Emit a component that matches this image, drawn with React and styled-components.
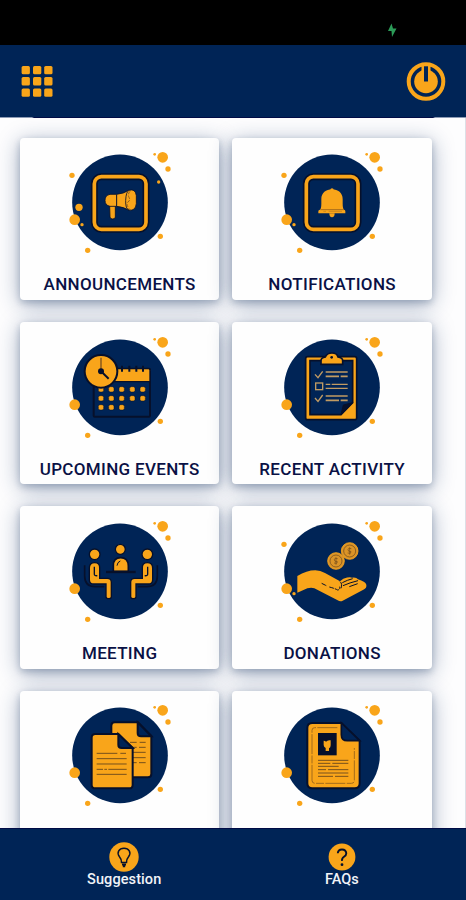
import React from "react"
import styled, { createGlobalStyle } from "styled-components"

const NAVY = "#002456"
const GOLD = "#f9a51a"
const INK = "#06102b"

const GlobalStyle = createGlobalStyle`
  * {
    box-sizing: border-box;
  }

  body {
    margin: 0;
    background: #fdfdfe;
    font-family: Roboto, sans-serif;
  }
`

const Screen = styled.div`
  display: flex;
  flex-direction: column;
  height: 900px;
  overflow: hidden;
`

const StatusBar = styled.div`
  flex: none;
  display: flex;
  justify-content: flex-end;
  height: 45px;
  padding: 23px 68px 0 0;
  background: #000;
`

const Header = styled.header`
  flex: none;
  display: flex;
  align-items: center;
  justify-content: space-between;
  height: 73px;
  padding: 0 20px 1px 21px;
  background:
    linear-gradient(90deg, #8d9bb5 32px, #000b45 34px, #000b45 433px, #8d9bb5 435px) bottom / 100% 1px no-repeat,
    ${NAVY};
`

const IconButton = styled.button`
  display: flex;
  padding: 0;
  border: 0;
  background: none;
`

const Content = styled.main`
  flex: 1;
  min-height: 0;
  overflow: hidden;
  padding: 19.7px 34px 0 20px;
  border-right: 1px solid #dcdfe6;
`

const Grid = styled.div`
  display: grid;
  grid-template-columns: 199.3px 199.3px;
  grid-auto-rows: 162.3px;
  gap: 22.1px 13.2px;
`

const Card = styled.div`
  display: flex;
  flex-direction: column;
  align-items: center;
  padding-top: 7.6px;
  border-radius: 4px;
  background: #fefefe;
  box-shadow: 0 3px 7px rgba(20, 50, 90, .24), 0 4px 22px rgba(20, 50, 100, .4);
`

const Art = styled.svg`
  flex: none;
  width: 120px;
  height: 115px;
`

const CardTitle = styled.div`
  margin-top: 14px;
  font-size: 17px;
  font-weight: 500;
  line-height: 20px;
  letter-spacing: .33px;
  color: #0a1145;
  white-space: nowrap;
`

const BottomNav = styled.nav`
  flex: none;
  display: flex;
  justify-content: center;
  height: 72px;
  padding-top: 13px;
  background: ${NAVY};
  border-top: 1px solid #000b45;
`

const NavItem = styled.a`
  display: flex;
  flex-direction: column;
  align-items: center;
  width: 217.6px;
  color: #f1f3f8;
  font-size: 14.5px;
  font-weight: 500;
  line-height: 15px;
  letter-spacing: ${props => props.$spacing}px;
`

const NavIcon = styled.svg`
  width: 30px;
  height: 30px;
`

// The artwork is drawn around the centre of the navy disc
const dots = [
  [128, -135, 16],
  [144, -100, 8],
  [104, -144, 4],
  [-136, 52, 16],
  [121, 102, 8],
  [-97, 144, 8],
]

const Badge = ({ extra = [], children }) => (
  <Art viewBox="-180 -172 360 345">
    <circle r="143.5" fill={NAVY} />
    {dots.concat(extra).map(([x, y, r]) => (
      <circle key={`${x},${y}`} cx={x} cy={y} r={r} fill={GOLD} />
    ))}
    {children}
  </Art>
)

const Frame = () => (
  <g fill="none">
    <rect x="-77" y="-77" width="155" height="158" rx="21" stroke={INK} strokeWidth="21" />
    <rect x="-77" y="-77" width="155" height="158" rx="21" stroke={GOLD} strokeWidth="11" />
  </g>
)

const Announcements = () => (
  <Badge extra={[[-144, -81, 8], [116, -61, 5], [-123, 15, 11], [-114, 67, 5]]}>
    <Frame />
    <g fill={GOLD} stroke={INK} strokeWidth="2.5">
      <path d="M-31 10h17v34q0 6-8 6t-8-6z" />
      <path d="M-10-24V12H-30Q-45 9-45-6T-30-24Z" />
      <path d="M-10-24Q12-26 27-37V24Q12 14-10 12Z" />
      <path d="M27-36Q46-42 49-20V4Q46 27 27 23Q16 20 17-6T27-36Z" />
      <path d="M30-33q-8 9-3 18t-3 14 4 21" fill="none" stroke="#7b501d" strokeDasharray="10 4" />
    </g>
  </Badge>
)

const Notifications = () => (
  <Badge extra={[[-144, -81, 8], [-114, 67, 5]]}>
    <Frame />
    <g fill={GOLD}>
      <circle cy="-37" r="5" />
      <path d="M-8 33H8Q8 45 0 45T-8 33Z" />
      <path d="M-41 33v-6q0-4 5-5 4-4 4-18V-10C-32-28-18-39 0-39S32-28 32-10V4q0 14 4 18 4 1 4 5v6z" />
      <path d="M-35 22H36" stroke="#a86c1c" strokeWidth="3" />
      <path d="M-10 27H30M-26 27h8" stroke="#a86c1c" strokeWidth="1.5" />
    </g>
  </Badge>
)

const UpcomingEvents = () => (
  <Badge>
    <rect x="-79" y="-56" width="169" height="144" rx="3" fill="none" stroke={INK} strokeWidth="6" />
    <path d="M-79-56H85q5 0 5 5V-17H-79Z" fill={GOLD} stroke={INK} strokeWidth="4" />
    <path d="M6-65v18M28-65v18M49-65v18M69-65v18" stroke={INK} strokeWidth="6" />
    {[6, 33, 60].map(y =>
      [-57, -26, 5, 37, 68].slice(0, y === 60 ? 3 : 5).map(x => (
        <rect key={`${x},${y}`} x={x - 8} y={y - 8} width="16" height="16" rx="5" fill={GOLD} stroke={INK} strokeWidth="1.5" />
      ))
    )}
    <circle cx="-57" cy="-48" r="49" fill={GOLD} stroke={INK} strokeWidth="6" />
    <path d="M-57-48V-89" stroke="#7b501d" strokeWidth="4" />
    <path d="M-57-48L-34-26" stroke={INK} strokeWidth="6" />
    <circle cx="-57" cy="-48" r="9" fill={INK} />
  </Badge>
)

const RecentActivity = () => (
  <Badge>
    <rect x="-79" y="-92" width="153" height="189" rx="6" fill={GOLD} stroke={INK} strokeWidth="5" />
    <path d="M-66-80H62V46L27 82H-66Z" fill={NAVY} stroke={INK} strokeWidth="5" />
    <path d="M62 46L27 82L34 53Z" fill={INK} stroke={INK} strokeWidth="3" strokeLinejoin="round" />
    <path d="M-33-69V-80q0-9 13-11Q-15-103 0-103T18-91q14 2 14 11v11z" fill={GOLD} stroke={INK} strokeWidth="5" />
    <circle cx="-1" cy="-90" r="4" fill={INK} />
    <g fill="none" stroke="#c19b63" strokeWidth="4">
      <path d="M-51-39l9 10 14-19M-51 32l9 10 14-19" />
      <rect x="-49" y="-13" width="21" height="20" />
      <path d="M-19-46H47M-19 26H47M-19 3H47M-19-9h14m4 0H47" />
      <path d="M-19-33h40m5 0H47M-19 39h40m5 0H47" strokeWidth="5" />
    </g>
  </Badge>
)

const Sitter = () => (
  <g>
    <path d="M-106-18V14Q-106 46-74 46H-47" fill="none" stroke={INK} strokeWidth="5" />
    <path
      d="M-92-10Q-92-26-76-26T-61-10V21H-38Q-26 21-26 33V76q0 6-8 6t-8-6V38H-79q-13 0-13-13z"
      fill={GOLD}
      stroke={INK}
      strokeWidth="4"
    />
    <path d="M-77-14V9q0 5 9 4" fill="none" stroke={INK} strokeWidth="4" />
    <circle cx="-76" cy="-51" r="16" fill={GOLD} stroke={INK} strokeWidth="4" />
  </g>
)

const Meeting = () => (
  <Badge>
    <Sitter />
    <g transform="translate(6 0) scale(-1 1)">
      <Sitter />
    </g>
    <path d="M-20 0V-17Q-20-41 2-41T25-17V0Z" fill={GOLD} stroke={INK} strokeWidth="5" />
    <path d="M-9-17Q-8-28 1-31" fill="none" stroke={INK} strokeWidth="3" />
    <path d="M-42 2H47" stroke={INK} strokeWidth="7" />
    <circle cx="1" cy="-66" r="15" fill={GOLD} stroke={INK} strokeWidth="4" />
  </Badge>
)

const Coin = ({ x, y }) => (
  <g transform={`translate(${x} ${y})`} fill="none" stroke="#81551d" strokeWidth="2.5">
    <circle r="25" fill="#db9427" stroke={GOLD} />
    <circle r="18" />
    <path d="M5-7Q-5-11-5-4T4 2Q5 10-6 6M0-11V11" />
  </g>
)

const Donations = () => (
  <Badge extra={[[-144, -81, 8], [-114, 67, 5]]}>
    <Coin x={53} y={-61} />
    <Coin x={12} y={-31} />
    <path
      d="M-104 14Q-76-3-50-3-35-3-21 5L24 30 34 22Q53 16 60 19 73 17 78 24 100 31 103 40 105 50 94 55L32 88Q25 92 17 87L-53 51Q-62 47-74 51L-104 64Z"
      fill={GOLD}
    />
    <g fill="none" stroke={INK} strokeWidth="3">
      <path d="M-31 36l16 8M-8 47Q8 51 17 56 25 55 23 46" strokeDasharray="14 3" />
      <path d="M24 31Q32 37 27 51M31 34Q46 26 62 22M33 43Q53 34 78 28M52 46L77 37" />
    </g>
  </Badge>
)

const Documents = () => (
  <Badge>
    <path d="M-16-99H54L94-58V56q0 10-10 10H-16q-10 0-10-10V-89q0-10 10-10z" fill={GOLD} stroke={INK} strokeWidth="6" />
    <path d="M53-99V-67q0 10 10 10H94Z" fill={NAVY} stroke={INK} strokeWidth="6" />
    <path d="M30-39H50M59-39H77M35-24H50M57-24H77M38-9H77M38 7H77M38 22H50M57 22H77" stroke="#76501c" strokeWidth="3" />
    <path d="M-74-64H-5L38-22V88q0 11-10 11H-74q-11 0-11-11V-53q0-11 11-11z" fill={GOLD} stroke={INK} strokeWidth="6" />
    <path d="M-5-64V-32q0 10 10 10H38Z" fill={NAVY} stroke={INK} strokeWidth="6" />
    <path d="M-70-6H-8M1-6H18M-70 10H20M-70 26H20M-70 42h19m4 0h8m4 0H20M-70 57H20" stroke="#76501c" strokeWidth="3" />
  </Badge>
)

const Profile = () => (
  <Badge>
    <path d="M-59-97H28L83-44V84q0 15-15 15H-59q-15 0-15-15V-82q0-15 15-15z" fill={GOLD} stroke={INK} strokeWidth="6" />
    <path d="M28-97V-62q0 18 18 18H83Z" fill={NAVY} stroke={INK} strokeWidth="5" />
    <path d="M16-83H-52q-8 0-8 8V75q0 9 9 9H58q9 0 9-9V-22" fill="none" stroke="#a36b1b" strokeWidth="3" strokeDasharray="60 4 24 4" />
    <rect x="-42" y="-67" width="56" height="67" fill={INK} />
    <path d="M-25-44q5 0 7 3 5-6 14-4v15q0 7-5 9v8h-10v-9q-6-3-6-9z" fill={GOLD} />
    <path d="M-42 15H49M-42 24H-5M1 24H49M-42 33H20M-42 43H-18M-12 43H49M-42 53H49M-42 63H3M9 63H49" stroke="#76501c" strokeWidth="3" />
  </Badge>
)

const menu = [
  { title: "ANNOUNCEMENTS", icon: Announcements },
  { title: "NOTIFICATIONS", icon: Notifications },
  { title: "UPCOMING EVENTS", icon: UpcomingEvents },
  { title: "RECENT ACTIVITY", icon: RecentActivity },
  { title: "MEETING", icon: Meeting },
  { title: "DONATIONS", icon: Donations },
  { icon: Documents },
  { icon: Profile },
]

const App = () => (
  <Screen>
    <GlobalStyle />
    <StatusBar>
      <svg width="11" height="15" viewBox="0 0 11 15">
        <path d="M4.5 0.5L1 8H4.5L5 14L9.5 5.5H6Z" fill="#2c9b58" />
      </svg>
    </StatusBar>
    <Header>
      <IconButton aria-label="Menu">
        <svg width="32" height="32" viewBox="0 0 32 32" fill={GOLD}>
          {[0.9, 12.1, 23.4].map(y =>
            [0.6, 12, 23.2].map(x => <rect key={`${x},${y}`} x={x} y={y} width="8.3" height="8.3" rx="1.5" />)
          )}
        </svg>
      </IconButton>
      <IconButton aria-label="Log out">
        <svg width="40" height="40" viewBox="0 0 40 40" fill="none">
          <circle cx="20" cy="20.5" r="17.3" stroke={GOLD} strokeWidth="4" />
          <circle cx="20" cy="20.5" r="11.8" fill={GOLD} />
          <path d="M15.5 4.5h9v8h-9z" fill={GOLD} />
          <path d="M20 5.3V20.5" stroke={NAVY} strokeWidth="4" />
        </svg>
      </IconButton>
    </Header>
    <Content>
      <Grid>
        {menu.map(({ title, icon: Icon }, i) => (
          <Card key={i}>
            <Icon />
            {title && <CardTitle>{title}</CardTitle>}
          </Card>
        ))}
      </Grid>
    </Content>
    <BottomNav>
      <NavItem $spacing={0.1}>
        <NavIcon viewBox="0 0 30 30" fill="none">
          <circle cx="15" cy="15" r="14.7" fill={GOLD} />
          <path d="M12.5 20.5Q12.5 17 10.3 14.5C7.5 10.5 10 6.3 15 6.3S22.5 10.5 19.7 14.5Q17.5 17 17.5 20.5Z" stroke={INK} strokeWidth="1.5" />
          <path d="M13 22.5h4M13.8 24.3h2.4" stroke={INK} strokeWidth="1.8" />
        </NavIcon>
        Suggestion
      </NavItem>
      <NavItem $spacing={0}>
        <NavIcon viewBox="0 0 30 30" fill="none">
          <circle cx="15" cy="15" r="13.4" fill={GOLD} />
          <path d="M10.8 11.3Q11 7.5 15 7.5T19.3 11.3Q19.3 13.3 17 14.8T15 18.8" stroke={INK} strokeWidth="1.9" />
          <circle cx="15" cy="22.7" r="1.4" fill={INK} />
        </NavIcon>
        FAQs
      </NavItem>
    </BottomNav>
  </Screen>
)

export default App
